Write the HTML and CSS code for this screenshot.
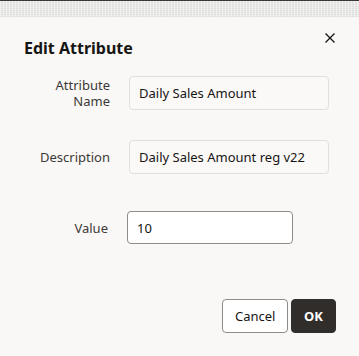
FILE: index.html
```html
<!DOCTYPE html>
<html>
<head>
<meta charset="utf-8">
<link rel="stylesheet" href="styles.css">
</head>
<body>
<div class="backdrop"></div>
<div class="dialog">
  <div class="header">
    <h1 class="title">Edit Attribute</h1>
    <button class="close" aria-label="Close">
      <svg width="12" height="12" viewBox="0 0 12 12"><path d="M1.5 1.5 L10.5 10.5 M10.5 1.5 L1.5 10.5" stroke="#161513" stroke-width="1.3" fill="none"/></svg>
    </button>
  </div>
  <div class="form">
    <div class="row">
      <label class="label"><span class="line">Attribute</span><span class="line">Name</span></label>
      <div class="field readonly">Daily Sales Amount</div>
    </div>
    <div class="row">
      <label class="label">Description</label>
      <div class="field readonly">Daily Sales Amount reg v22</div>
    </div>
    <div class="row row-value">
      <label class="label">Value</label>
      <input class="field input" type="text" value="10">
    </div>
  </div>
  <div class="footer">
    <button class="btn btn-secondary">Cancel</button>
    <button class="btn btn-primary">OK</button>
  </div>
</div>
</body>
</html>
```
FILE: styles.css
```css
* { box-sizing: border-box; }
html, body { margin: 0; padding: 0; }
body {
  width: 359px;
  height: 356px;
  background: #f9f8f6;
  font-family: "Noto Sans", "Open Sans", sans-serif;
  color: #161513;
  overflow: hidden;
}
.backdrop {
  height: 17px;
  border-top: 1px solid #3a3836;
  background-color: #e9e9e8;
  background-image:
    repeating-linear-gradient(90deg, rgba(255,255,255,0.5) 0 1px, transparent 1px 3px),
    repeating-linear-gradient(0deg, rgba(200,200,200,0.35) 0 1px, transparent 1px 2px);
}
.dialog {
  padding: 0 24px;
}
.header {
  display: flex;
  justify-content: space-between;
  align-items: flex-start;
}
.title {
  margin: 19px 0 0;
  font-size: 16px;
  font-weight: 700;
  line-height: 24px;
}
.close {
  margin: 9px -7px 0 0;
  width: 24px;
  height: 24px;
  border: 0;
  background: transparent;
  padding: 0;
  display: flex;
  align-items: center;
  justify-content: center;
}
.form {
  margin-top: 16px;
  display: flex;
  flex-direction: column;
  gap: 30px;
}
.row {
  display: grid;
  grid-template-columns: 86px 200px;
  column-gap: 19px;
  align-items: center;
}
.row-value {
  margin-top: 7px;
  grid-template-columns: 84px 166px;
}
.label {
  display: flex;
  flex-direction: column;
  align-items: flex-end;
  text-align: right;
  font-size: 13px;
  line-height: 16px;
  color: #3c3a37;
}
.line { display: block; height: 16px; }
.field {
  height: 34px;
  border-radius: 4px;
  font-family: inherit;
  font-size: 13px;
  color: #161513;
  padding: 0 9px;
  display: flex;
  align-items: center;
}
.readonly {
  background: #faf9f8;
  border: 1px solid #e2dfdc;
}
.input {
  height: 33px;
  background: #fff;
  border: 1px solid #8f8b87;
  outline: none;
}
.footer {
  margin-top: 55px;
  display: flex;
  justify-content: flex-end;
  gap: 3px;
  margin-right: -1px;
}
.btn {
  height: 34px;
  border-radius: 4px;
  font-family: inherit;
  font-size: 13px;
  padding: 0 12px;
}
.btn-secondary {
  width: 66px;
  background: #fff;
  border: 1px solid #8f8b87;
  color: #161513;
}
.btn-primary {
  width: 45px;
  background: #312d2a;
  border: 1px solid #312d2a;
  color: #fff;
  font-weight: 700;
}
```
